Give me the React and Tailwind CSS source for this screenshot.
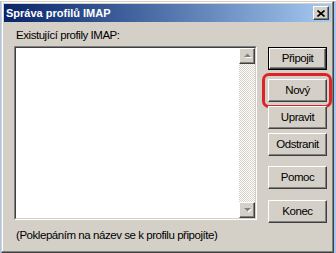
import React from "react";

const raised =
  "border border-t-white border-l-white border-r-[#404040] border-b-[#404040] shadow-[inset_-1px_-1px_#808080,inset_1px_1px_#d4d0c8] bg-[#d4d0c8]";

const txt = "text-[11.5px] tracking-[-0.45px]";

const Btn = ({ label, isDefault = false }) => {
  if (isDefault) {
    return (
      <div className="border border-black">
        <div
          className={`h-[21px] flex items-center justify-center ${txt} text-black ${raised}`}
        >
          {label}
        </div>
      </div>
    );
  }
  return (
    <div
      className={`h-[23px] flex items-center justify-center ${txt} text-black ${raised}`}
    >
      {label}
    </div>
  );
};

const ArrowBtn = ({ up }) => (
  <div className={`w-[16px] h-[16px] flex items-center justify-center ${raised}`}>
    <svg width="9" height="6" viewBox="0 0 9 6">
      {up ? (
        <>
          <path d="M2 5h7L5.5 1.5z" fill="#fff" />
          <path d="M1 4h7L4.5 0.5z" fill="#808080" />
        </>
      ) : (
        <>
          <path d="M2 2h7L5.5 5.5z" fill="#fff" />
          <path d="M1 1h7L4.5 4.5z" fill="#808080" />
        </>
      )}
    </svg>
  </div>
);

export default function App() {
  const buttons = [
    { label: "Připojit", mt: "mt-[25px]", isDefault: true },
    { label: "Nový", mt: "mt-[9px]", highlight: true },
    { label: "Upravit", mt: "mt-[4px]" },
    { label: "Odstranit", mt: "mt-[4px]" },
    { label: "Pomoc", mt: "mt-[10px]" },
    { label: "Konec", mt: "mt-[11px]" },
  ];

  return (
    <div
      className="w-[336px] h-[253px] bg-[#a9c6ee] flex flex-col overflow-hidden"
      style={{ fontFamily: '"Liberation Sans", Arial, sans-serif' }}
    >
      {/* strip of whatever sits behind the dialog */}
      <div className="h-[1px] bg-white shrink-0" />

      {/* Window */}
      <div className="ml-[1px] w-[333px] flex-1 flex flex-col p-[2px] bg-[#d4d0c8] border border-t-[#d4d0c8] border-l-[#d4d0c8] border-r-[#404040] border-b-[#404040] shadow-[inset_-1px_-1px_#808080,inset_1px_1px_#ffffff]">
        {/* Title bar */}
        <div className="h-[18px] shrink-0 flex items-center justify-between pl-[2px] pr-[2px] bg-gradient-to-r from-[#0a246a] to-[#a6caf0]">
          <span className="text-white font-bold text-[11px] leading-none">
            Správa profilů IMAP
          </span>
          <div className={`w-[16px] h-[14px] flex items-center justify-center ${raised}`}>
            <svg width="8" height="7" viewBox="0 0 8 7">
              <path d="M0.5 0.5L7.5 6.5M7.5 0.5L0.5 6.5" stroke="#000" strokeWidth="1.6" />
            </svg>
          </div>
        </div>

        {/* Body */}
        <div className="flex-1 flex pl-[10px] text-black">
          <div className="flex flex-col w-[243px]">
            <div className={`mt-[7px] ml-[2px] ${txt} leading-[13px]`}>
              Existující profily IMAP:
            </div>
            <div className="mt-[4px] h-[174px] flex border border-t-[#808080] border-l-[#808080] border-r-white border-b-white">
              <div className="flex-1 flex border border-t-[#404040] border-l-[#404040] border-r-[#d4d0c8] border-b-[#d4d0c8] bg-white">
                <div className="flex-1" />
                <div className="w-[16px] flex flex-col bg-[repeating-conic-gradient(#d4d0c8_0_25%,#ffffff_0_50%)] bg-[length:2px_2px]">
                  <ArrowBtn up />
                  <div className="flex-1" />
                  <ArrowBtn />
                </div>
              </div>
            </div>
            <div className={`mt-[9px] ml-[2px] ${txt} leading-[13px]`}>
              (Poklepáním na název se k profilu připojíte)
            </div>
          </div>

          <div className="ml-[11px] w-[59px] flex flex-col">
            {buttons.map((b) => (
              <div key={b.label} className={`relative ${b.mt}`}>
                <Btn label={b.label} isDefault={b.isDefault} />
                {b.highlight && (
                  <div className="absolute -left-[6px] -right-[5px] -top-[6px] -bottom-[6px] rounded-[7px] border-[3px] border-[#dc2328]" />
                )}
              </div>
            ))}
          </div>
        </div>
      </div>
    </div>
  );
}
